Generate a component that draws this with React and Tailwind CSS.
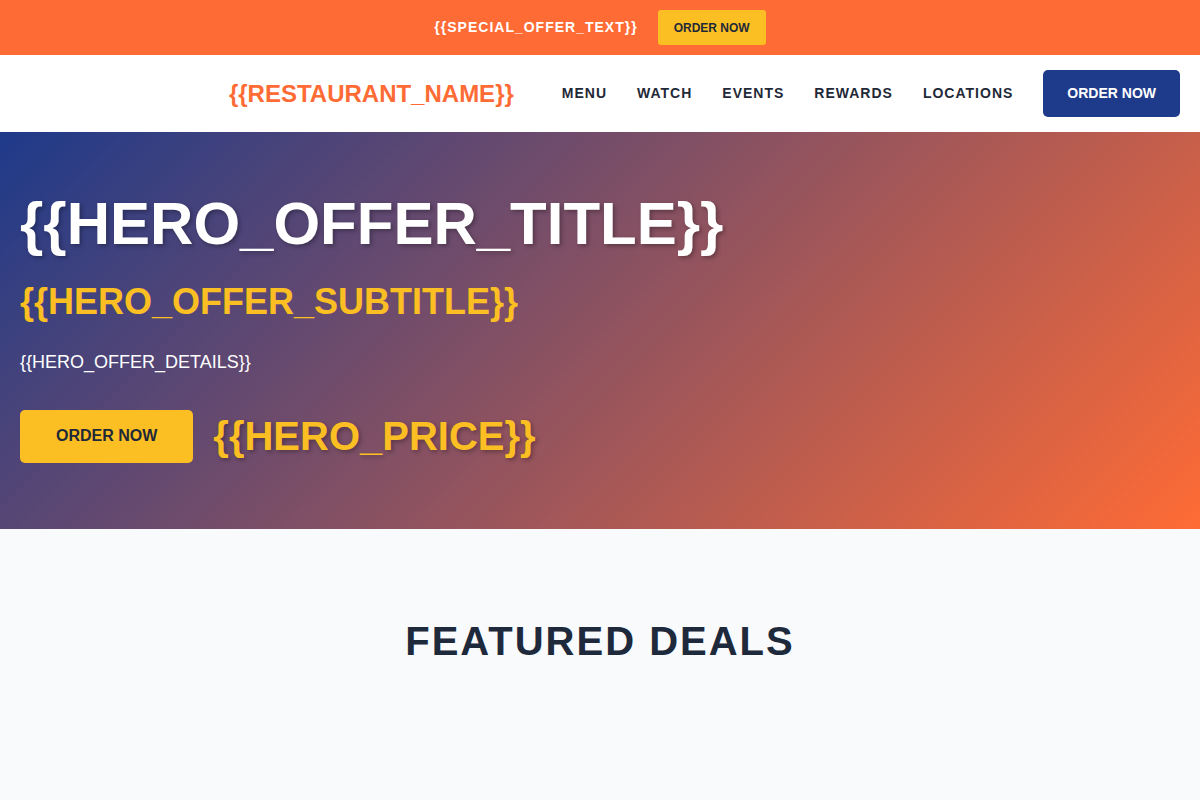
export default function App() {
  return (
    <div className="min-h-[800px] bg-[#f8fafc] font-['Liberation_Sans',Arial,sans-serif]">
      <div className="flex h-[55px] items-center justify-center gap-5 bg-[#ff6b35]">
        <span className="text-[14px] font-bold tracking-[1px] text-white">{'{{SPECIAL_OFFER_TEXT}}'}</span>
        <button className="h-[35px] rounded-[3px] bg-[#fbbf24] px-4 text-[12px] font-bold text-[#1f2937]">ORDER NOW</button>
      </div>
      <header className="flex h-[77px] items-center justify-end bg-white px-5 shadow-[0_2px_6px_rgba(0,0,0,0.06)]">
        <div className="mr-12 text-[24px] font-bold text-[#ff6b35]">{'{{RESTAURANT_NAME}}'}</div>
        <nav className="flex items-center gap-[30px] text-[14px] font-bold tracking-[1px] text-[#1f2937]">
          <a>MENU</a>
          <a>WATCH</a>
          <a>EVENTS</a>
          <a>REWARDS</a>
          <a>LOCATIONS</a>
          <button className="h-[47px] rounded-[5px] bg-[#1e3a8a] px-6 text-[14px] font-bold tracking-normal text-white">ORDER NOW</button>
        </nav>
      </header>
      <section className="h-[397px] bg-[linear-gradient(135deg,#1e3a8a_0%,#ff6b35_100%)] px-5 pt-14">
        <h1 className="text-[60px] font-bold leading-[1.2] text-white [text-shadow:2px_2px_4px_rgba(0,0,0,0.3)]">{'{{HERO_OFFER_TITLE}}'}</h1>
        <h2 className="mt-5 text-[36px] font-bold leading-[1.2] text-[#fbbf24]">{'{{HERO_OFFER_SUBTITLE}}'}</h2>
        <p className="mt-[26px] text-[18px] leading-[1.5] text-white">{'{{HERO_OFFER_DETAILS}}'}</p>
        <div className="mt-[30px] flex items-center gap-5">
          <button className="h-[53px] rounded-[5px] bg-[#fbbf24] px-9 text-[16px] font-bold text-[#1f2937]">ORDER NOW</button>
          <span className="text-[40px] font-bold text-[#fbbf24] [text-shadow:2px_2px_4px_rgba(0,0,0,0.3)]">{'{{HERO_PRICE}}'}</span>
        </div>
      </section>
      <section className="pt-[82px] text-center">
        <h2 className="text-[40px] font-bold leading-[1.5] tracking-[2px] text-[#1e293b]">FEATURED DEALS</h2>
      </section>
    </div>
  );
}
